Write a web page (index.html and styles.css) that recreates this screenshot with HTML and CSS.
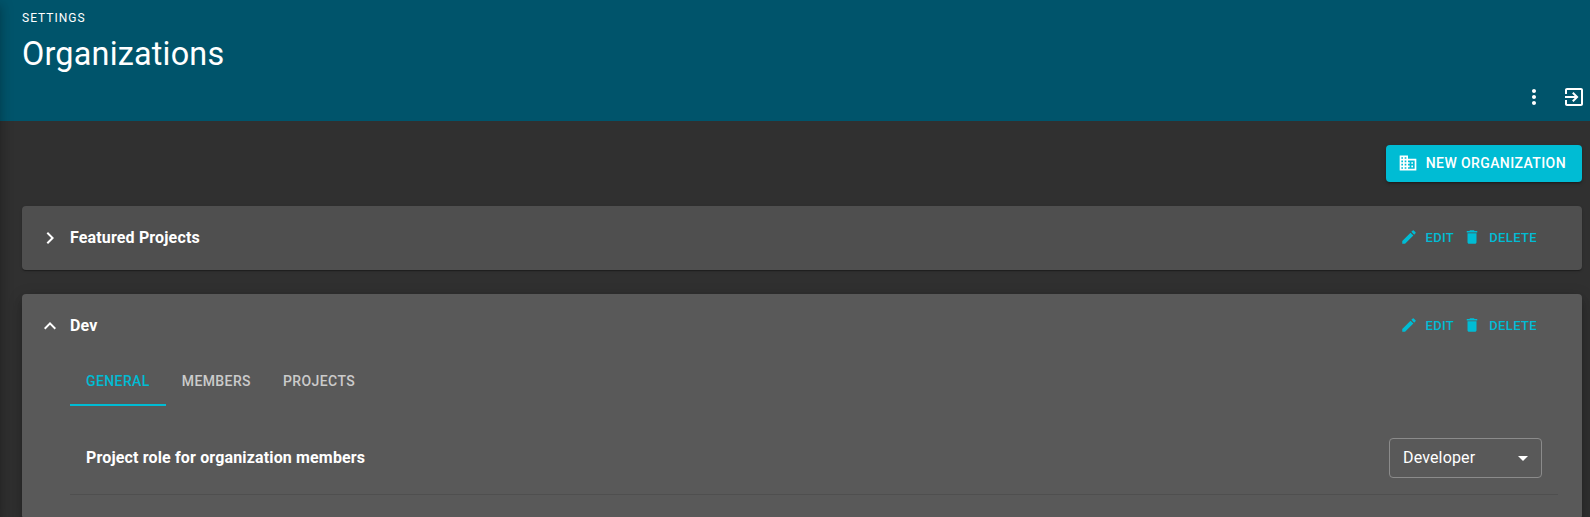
FILE: index.html
```html
<!DOCTYPE html>
<html lang="en">
<head>
<meta charset="utf-8">
<title>Organizations</title>
<link rel="stylesheet" href="styles.css">
</head>
<body>
<svg class="defs" aria-hidden="true">
  <symbol id="expand" viewBox="0 0 24 24"><path d="M16.59 8.59 12 13.17 7.41 8.59 6 10l6 6 6-6z"/></symbol>
  <symbol id="edit" viewBox="0 0 24 24"><path d="M3 17.25V21h3.75L17.81 9.94l-3.75-3.75L3 17.25zM20.71 7.04c.39-.39.39-1.02 0-1.41l-2.34-2.34a.9959.9959 0 0 0-1.41 0l-1.83 1.83 3.75 3.75 1.83-1.83z"/></symbol>
  <symbol id="delete" viewBox="0 0 24 24"><path d="M6 19c0 1.1.9 2 2 2h8c1.1 0 2-.9 2-2V7H6v12zM19 4h-3.5l-1-1h-5l-1 1H5v2h14V4z"/></symbol>
  <symbol id="business" viewBox="0 0 24 24"><path d="M12 7V3H2v18h20V7H12zM6 19H4v-2h2v2zm0-4H4v-2h2v2zm0-4H4V9h2v2zm0-4H4V5h2v2zm4 12H8v-2h2v2zm0-4H8v-2h2v2zm0-4H8V9h2v2zm0-4H8V5h2v2zm10 12h-8v-2h2v-2h-2v-2h2v-2h-2V9h8v10zm-2-8h-2v2h2v-2zm0 4h-2v2h2v-2z"/></symbol>
  <symbol id="more" viewBox="0 0 24 24"><path d="M12 8c1.1 0 2-.9 2-2s-.9-2-2-2-2 .9-2 2 .9 2 2 2zm0 2c-1.1 0-2 .9-2 2s.9 2 2 2 2-.9 2-2-.9-2-2-2zm0 6c-1.1 0-2 .9-2 2s.9 2 2 2 2-.9 2-2-.9-2-2-2z"/></symbol>
  <symbol id="exit" viewBox="0 0 24 24"><path d="M10.09 15.59 11.5 17l5-5-5-5-1.41 1.41L12.67 11H3v2h9.67l-2.58 2.59zM19 3H5c-1.11 0-2 .9-2 2v4h2V5h14v14H5v-4H3v4c0 1.1.89 2 2 2h14c1.1 0 2-.9 2-2V5c0-1.1-.9-2-2-2z"/></symbol>
  <symbol id="arrow" viewBox="0 0 24 24"><path d="m7 10 5 5 5-5z"/></symbol>
</svg>
<header class="header">
  <div class="overline">Settings</div>
  <h1 class="title">Organizations</h1>
  <div class="header-actions">
    <svg class="icon"><use href="#more"/></svg>
    <svg class="icon"><use href="#exit"/></svg>
  </div>
</header>
<main class="content">
  <div class="toolbar">
    <button class="primary"><svg class="icon icon-md"><use href="#business"/></svg><span>New Organization</span></button>
  </div>
  <section class="card">
    <div class="card-head">
      <svg class="icon chevron-right"><use href="#expand"/></svg>
      <h2 class="name">Featured Projects</h2>
      <button class="action action-edit"><svg class="icon icon-sm"><use href="#edit"/></svg><span>Edit</span></button>
      <button class="action"><svg class="icon icon-sm"><use href="#delete"/></svg><span>Delete</span></button>
    </div>
  </section>
  <section class="card card-open">
    <div class="card-head">
      <svg class="icon chevron-up"><use href="#expand"/></svg>
      <h2 class="name">Dev</h2>
      <button class="action action-edit"><svg class="icon icon-sm"><use href="#edit"/></svg><span>Edit</span></button>
      <button class="action"><svg class="icon icon-sm"><use href="#delete"/></svg><span>Delete</span></button>
    </div>
    <div class="card-body">
      <nav class="tabs">
        <button class="tab tab-active">General</button>
        <button class="tab">Members</button>
        <button class="tab">Projects</button>
      </nav>
      <div class="row">
        <span class="row-label">Project role for organization members</span>
        <div class="select"><span class="select-value">Developer</span><svg class="icon"><use href="#arrow"/></svg></div>
      </div>
    </div>
  </section>
</main>
<div class="edge-shadow"></div>
</body>
</html>
```
FILE: styles.css
```css
* { box-sizing: border-box; }
body {
  margin: 0;
  height: 517px;
  overflow: hidden;
  background: #303030;
  color: #fff;
  font-family: Roboto, "Liberation Sans", sans-serif;
}
button {
  border: 0;
  background: none;
  font-family: inherit;
  font-weight: 500;
  letter-spacing: 0.02857em;
  text-transform: uppercase;
  white-space: nowrap;
}
h1, h2 { margin: 0; }
.defs { display: none; }
.icon { width: 24px; height: 24px; fill: currentColor; flex: none; display: block; }
.icon-md { width: 20px; height: 20px; }
.icon-sm { width: 18px; height: 18px; }

.header {
  height: 121px;
  padding: 8px 4px 0 22px;
  background: #00546b;
}
.overline {
  font-size: 12px;
  line-height: 20px;
  letter-spacing: 1px;
  text-transform: uppercase;
}
.title {
  margin-top: 5px;
  font-size: 32.4px;
  font-weight: 400;
  line-height: 42px;
  letter-spacing: 0.006em;
}
.header-actions {
  display: flex;
  justify-content: flex-end;
  gap: 16px;
  margin-top: 10px;
}

.content { padding: 24px 8px 0 22px; }
.toolbar { display: flex; justify-content: flex-end; margin-bottom: 24px; }
.primary {
  display: flex;
  align-items: center;
  gap: 8px;
  height: 37px;
  padding: 0 16px 1px 12px;
  border-radius: 4px;
  background: #00bcd4;
  color: #fff;
  font-size: 14px;
  box-shadow: 0 3px 1px -2px rgba(0,0,0,.2), 0 2px 2px rgba(0,0,0,.14), 0 1px 5px rgba(0,0,0,.12);
}
.card {
  margin-bottom: 24px;
  border-radius: 4px;
  background: #4f4f4f;
  box-shadow: 0 2px 1px -1px rgba(0,0,0,.2), 0 1px 1px rgba(0,0,0,.14), 0 1px 3px rgba(0,0,0,.12);
}
.card-open {
  height: 223px;
  margin-bottom: 0;
  border-radius: 4px 4px 1px 1px;
  background: #595959;
  box-shadow: 0 5px 5px -3px rgba(0,0,0,.2), 0 8px 10px 1px rgba(0,0,0,.14), 0 3px 14px 2px rgba(0,0,0,.12);
}
.card-head {
  display: flex;
  align-items: center;
  height: 64px;
  padding: 0 40px 0 16px;
}
.chevron-right { transform: rotate(-90deg); }
.chevron-up { transform: rotate(180deg); }
.name {
  flex: 1;
  margin-left: 8px;
  font-size: 16px;
  font-weight: 700;
  line-height: 24px;
  letter-spacing: 0.00938em;
}
.action {
  display: flex;
  align-items: center;
  gap: 8px;
  height: 30px;
  margin-bottom: 2px;
  padding: 0 5px 0 3px;
  color: #00bcd4;
  font-size: 13px;
}
.action-edit { gap: 7px; padding-right: 6px; }
.card-body { padding: 0 24px 0 48px; }
.tabs { display: flex; height: 48px; }
.tab {
  padding: 0 16px;
  border-bottom: 2px solid transparent;
  color: rgba(255,255,255,.7);
  font-size: 14px;
}
.tab-active { color: #00bcd4; border-color: #00bcd4; }
.row {
  display: flex;
  align-items: center;
  justify-content: space-between;
  margin-top: 16px;
  height: 73px;
  padding: 0 16px;
  border-bottom: 1px solid #4f4f4f;
}
.row-label {
  padding-bottom: 2px;
  font-size: 16px;
  font-weight: 700;
  letter-spacing: 0.00938em;
}
.select {
  display: flex;
  align-items: center;
  justify-content: space-between;
  width: 153px;
  height: 40px;
  padding: 0 6px 0 13px;
  border: 1px solid #8b8b8b;
  border-radius: 4px;
  font-size: 16px;
  letter-spacing: 0.00938em;
}
.select-value { padding-bottom: 2px; }
.edge-shadow {
  position: absolute;
  left: -10px;
  top: 0;
  width: 10px;
  height: 517px;
  box-shadow: 0 8px 10px 1px rgba(0,0,0,.14), 0 3px 14px 2px rgba(0,0,0,.12), 0 5px 5px -3px rgba(0,0,0,.2);
}
```
